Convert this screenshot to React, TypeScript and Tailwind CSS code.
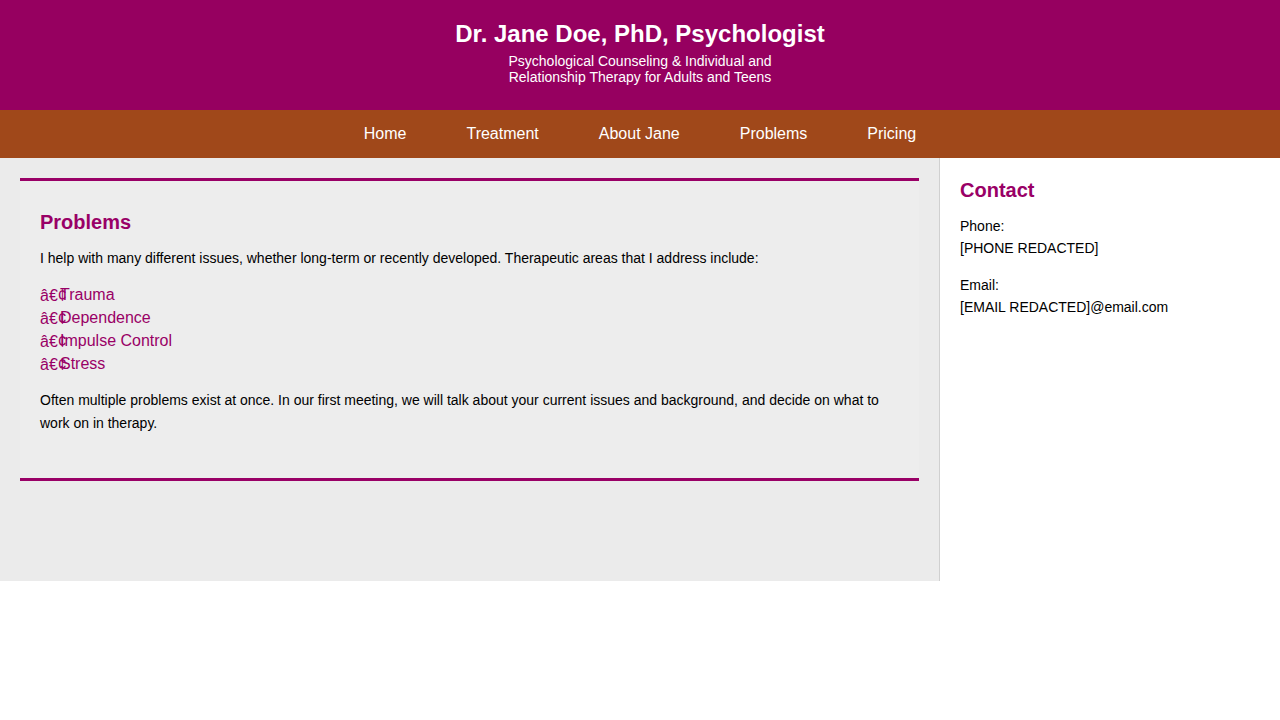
import React from "react"

const navItems = ["Home", "Treatment", "About Jane", "Problems", "Pricing"]
const problems = ["Trauma", "Dependence", "Impulse Control", "Stress"]

export default function App() {
  return (
    <div className="font-['Liberation_Sans',Arial,sans-serif] text-black">
      {/* Header */}
      <header className="bg-[#960060] text-white text-center pt-5 pb-[25px]">
        <h1 className="text-[24px] font-bold leading-7">Dr. Jane Doe, PhD, Psychologist</h1>
        <p className="mx-auto mt-[5px] max-w-[290px] text-[14px] leading-4">
          Psychological Counseling &amp; Individual and Relationship Therapy for Adults and Teens
        </p>
      </header>

      {/* Nav */}
      <nav className="bg-[#a0481a] flex justify-center h-12">
        {navItems.map((item) => (
          <a key={item} href="#" className="flex items-center px-[30px] text-base text-white">
            {item}
          </a>
        ))}
      </nav>

      {/* Main */}
      <div className="grid grid-cols-[940px_1fr] min-h-[423px]">
        <main className="bg-[#ebebeb] border-r border-[#d0d0d0] px-5 pt-5">
          <section className="bg-[#ededed] border-y-[3px] border-[#990066] px-5 pt-[29px] pb-[30px]">
            <h2 className="text-[20px] font-bold leading-6 text-[#990066] mb-[13px]">Problems</h2>
            <p className="text-[14px] leading-[22.4px] mb-[14px]">
              I help with many different issues, whether long-term or recently developed. Therapeutic areas that I address include:
            </p>
            <ul className="mb-[14px]">
              {problems.map((p) => (
                <li key={p} className="relative pl-5 text-base leading-[23px] text-[#990066]">
                  <span className="absolute left-0 top-[1px]">â€¢</span>
                  {p}
                </li>
              ))}
            </ul>
            <p className="text-[14px] leading-[22.4px] mb-[14px]">
              Often multiple problems exist at once. In our first meeting, we will talk about your current issues and background, and decide on what to work on in therapy.
            </p>
          </section>
        </main>

        <aside className="bg-white p-5">
          <h2 className="text-[20px] font-bold leading-6 text-[#990066] mb-[13px]">Contact</h2>
          <p className="text-[14px] leading-[22px] mb-[15px]">
            Phone:
            <br />
            [PHONE REDACTED]
          </p>
          <p className="text-[14px] leading-[22px]">
            Email:
            <br />
            [EMAIL REDACTED]@email.com
          </p>
        </aside>
      </div>
    </div>
  )
}
